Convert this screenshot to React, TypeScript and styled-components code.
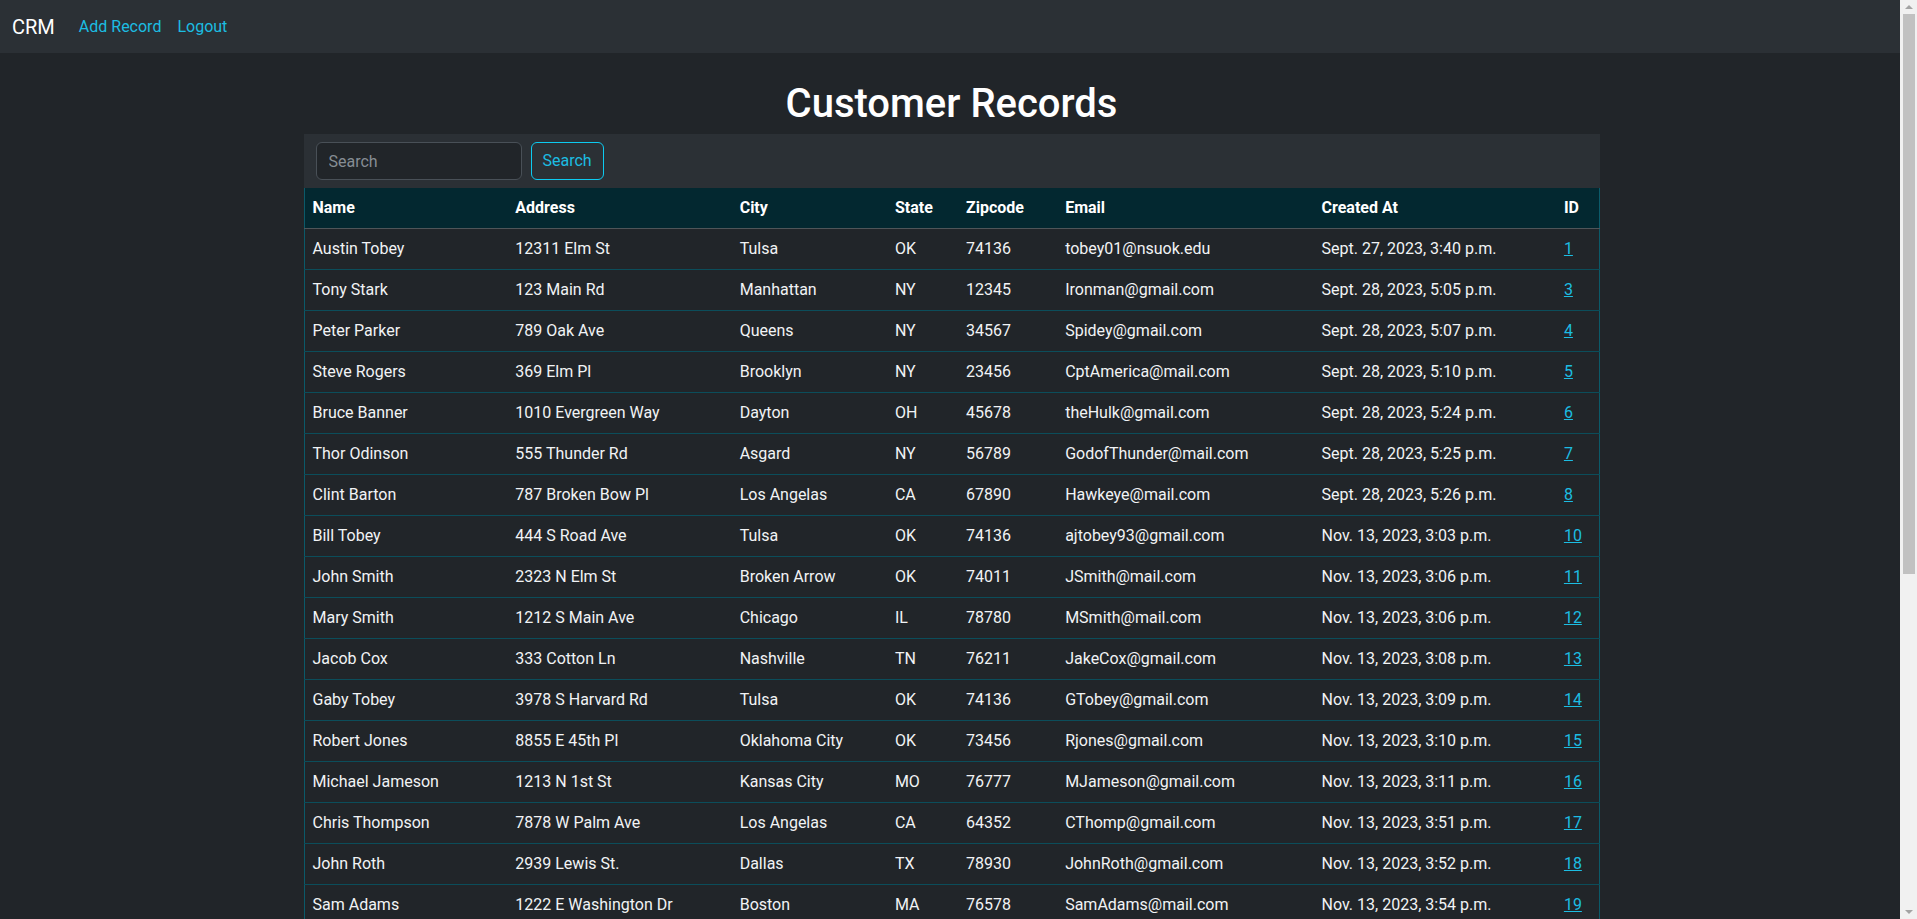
import styled, { createGlobalStyle } from 'styled-components';

const GlobalStyle = createGlobalStyle`
  html, body {
    margin: 0;
    padding: 0;
    background-color: #212529;
    color: #dee2e6;
    font-family: Roboto, "Liberation Sans", sans-serif;
    font-size: 16px;
    line-height: 1.5;
  }
  * { box-sizing: border-box; }
`;

// leaves room for the window scrollbar seen on the right
const Page = styled.div`
  padding-right: 14px;
`;

const ScrollTrack = styled.div`
  position: fixed;
  top: 0;
  right: 0;
  bottom: 0;
  width: 17px;
  display: flex;
  flex-direction: column;
  align-items: center;
  background-color: #f1f1f1;
`;

const ScrollArrow = styled.div<{ $down?: boolean }>`
  height: 14px;
  width: 100%;
  display: flex;
  align-items: center;
  justify-content: center;
  &::before {
    content: '';
    border-left: 4px solid transparent;
    border-right: 4px solid transparent;
    ${(p) => (p.$down ? 'border-top: 4px solid #a3a3a3;' : 'border-bottom: 4px solid #a3a3a3;')}
  }
`;

const ScrollThumb = styled.div`
  width: 12px;
  height: 560px;
  background-color: #c1c1c1;
`;

const ScrollSpacer = styled.div`
  flex: 1;
`;

const Navbar = styled.nav`
  display: flex;
  align-items: center;
  height: 53px;
  padding: 0 12px;
  background-color: #2b3035;
`;

const Brand = styled.a`
  font-size: 20px;
  color: #fff;
  text-decoration: none;
  margin-right: 16px;
  line-height: 30px;
`;

const NavLink = styled.a`
  color: #1cbde2;
  text-decoration: none;
  padding: 8px;
`;

const Main = styled.main`
  max-width: 1320px;
  margin: 0 auto;
  padding: 27px 12px 40px;
`;

const Title = styled.h1`
  margin: 0 0 6px;
  font-size: 40px;
  font-weight: 500;
  line-height: 1.2;
  color: #fff;
  text-align: center;
`;

const SearchBar = styled.form`
  display: flex;
  align-items: center;
  gap: 9px;
  padding: 8px 12px;
  background-color: #2b3035;
`;

const SearchInput = styled.input`
  width: 206px;
  height: 38px;
  padding: 6px 12px;
  font: inherit;
  color: #dee2e6;
  background-color: #212529;
  border: 1px solid #495057;
  border-radius: 6px;
  outline: none;
  &::placeholder { color: #868d94; }
`;

const SearchButton = styled.button`
  height: 38px;
  padding: 6px 11px;
  font: inherit;
  color: #1cbde2;
  background: transparent;
  border: 1px solid #0dcaf0;
  border-radius: 6px;
  cursor: pointer;
`;

const Table = styled.table`
  width: 100%;
  table-layout: fixed;
  border-collapse: collapse;
  border-left: 1px solid #0b5a69;
  border-right: 1px solid #0b5a69;
`;

const HeadRow = styled.tr`
  background-color: #032830;
  border-bottom: 1px solid #4f5559;
`;

const Th = styled.th`
  padding: 8px;
  text-align: left;
  font-weight: 700;
  color: #fff;
  line-height: 24px;
  white-space: nowrap;
`;

const Row = styled.tr`
  border-bottom: 1px solid #0b4d5a;
`;

const Td = styled.td`
  padding: 8px;
  line-height: 24px;
  color: #f1f3f5;
  white-space: nowrap;
  overflow: hidden;
`;

const IdLink = styled.a`
  color: #1cbde2;
  text-decoration: underline;
`;

type Customer = {
  name: string;
  address: string;
  city: string;
  state: string;
  zip: string;
  email: string;
  created: string;
  id: number;
};

const columns: { label: string; width: number }[] = [
  { label: 'Name', width: 203 },
  { label: 'Address', width: 224 },
  { label: 'City', width: 155 },
  { label: 'State', width: 71 },
  { label: 'Zipcode', width: 99 },
  { label: 'Email', width: 256 },
  { label: 'Created At', width: 242 },
  { label: 'ID', width: 43 },
];

const customers: Customer[] = [
  { name: 'Austin Tobey', address: '12311 Elm St', city: 'Tulsa', state: 'OK', zip: '74136', email: 'tobey01@nsuok.edu', created: 'Sept. 27, 2023, 3:40 p.m.', id: 1 },
  { name: 'Tony Stark', address: '123 Main Rd', city: 'Manhattan', state: 'NY', zip: '12345', email: 'Ironman@gmail.com', created: 'Sept. 28, 2023, 5:05 p.m.', id: 3 },
  { name: 'Peter Parker', address: '789 Oak Ave', city: 'Queens', state: 'NY', zip: '34567', email: 'Spidey@gmail.com', created: 'Sept. 28, 2023, 5:07 p.m.', id: 4 },
  { name: 'Steve Rogers', address: '369 Elm Pl', city: 'Brooklyn', state: 'NY', zip: '23456', email: 'CptAmerica@mail.com', created: 'Sept. 28, 2023, 5:10 p.m.', id: 5 },
  { name: 'Bruce Banner', address: '1010 Evergreen Way', city: 'Dayton', state: 'OH', zip: '45678', email: 'theHulk@gmail.com', created: 'Sept. 28, 2023, 5:24 p.m.', id: 6 },
  { name: 'Thor Odinson', address: '555 Thunder Rd', city: 'Asgard', state: 'NY', zip: '56789', email: 'GodofThunder@mail.com', created: 'Sept. 28, 2023, 5:25 p.m.', id: 7 },
  { name: 'Clint Barton', address: '787 Broken Bow Pl', city: 'Los Angelas', state: 'CA', zip: '67890', email: 'Hawkeye@mail.com', created: 'Sept. 28, 2023, 5:26 p.m.', id: 8 },
  { name: 'Bill Tobey', address: '444 S Road Ave', city: 'Tulsa', state: 'OK', zip: '74136', email: 'ajtobey93@gmail.com', created: 'Nov. 13, 2023, 3:03 p.m.', id: 10 },
  { name: 'John Smith', address: '2323 N Elm St', city: 'Broken Arrow', state: 'OK', zip: '74011', email: 'JSmith@mail.com', created: 'Nov. 13, 2023, 3:06 p.m.', id: 11 },
  { name: 'Mary Smith', address: '1212 S Main Ave', city: 'Chicago', state: 'IL', zip: '78780', email: 'MSmith@mail.com', created: 'Nov. 13, 2023, 3:06 p.m.', id: 12 },
  { name: 'Jacob Cox', address: '333 Cotton Ln', city: 'Nashville', state: 'TN', zip: '76211', email: 'JakeCox@gmail.com', created: 'Nov. 13, 2023, 3:08 p.m.', id: 13 },
  { name: 'Gaby Tobey', address: '3978 S Harvard Rd', city: 'Tulsa', state: 'OK', zip: '74136', email: 'GTobey@gmail.com', created: 'Nov. 13, 2023, 3:09 p.m.', id: 14 },
  { name: 'Robert Jones', address: '8855 E 45th Pl', city: 'Oklahoma City', state: 'OK', zip: '73456', email: 'Rjones@gmail.com', created: 'Nov. 13, 2023, 3:10 p.m.', id: 15 },
  { name: 'Michael Jameson', address: '1213 N 1st St', city: 'Kansas City', state: 'MO', zip: '76777', email: 'MJameson@gmail.com', created: 'Nov. 13, 2023, 3:11 p.m.', id: 16 },
  { name: 'Chris Thompson', address: '7878 W Palm Ave', city: 'Los Angelas', state: 'CA', zip: '64352', email: 'CThomp@gmail.com', created: 'Nov. 13, 2023, 3:51 p.m.', id: 17 },
  { name: 'John Roth', address: '2939 Lewis St.', city: 'Dallas', state: 'TX', zip: '78930', email: 'JohnRoth@gmail.com', created: 'Nov. 13, 2023, 3:52 p.m.', id: 18 },
  { name: 'Sam Adams', address: '1222 E Washington Dr', city: 'Boston', state: 'MA', zip: '76578', email: 'SamAdams@mail.com', created: 'Nov. 13, 2023, 3:54 p.m.', id: 19 },
];

const App = () => {
  return (
    <Page>
      <GlobalStyle />
      <Navbar>
        <Brand href="#">CRM</Brand>
        <NavLink href="#">Add Record</NavLink>
        <NavLink href="#">Logout</NavLink>
      </Navbar>
      <Main>
        <Title>Customer Records</Title>
        <SearchBar onSubmit={(e) => e.preventDefault()}>
          <SearchInput type="search" placeholder="Search" />
          <SearchButton type="submit">Search</SearchButton>
        </SearchBar>
        <Table>
          <colgroup>
            {columns.map((c) => (
              <col key={c.label} style={{ width: c.width }} />
            ))}
          </colgroup>
          <thead>
            <HeadRow>
              {columns.map((c) => (
                <Th key={c.label}>{c.label}</Th>
              ))}
            </HeadRow>
          </thead>
          <tbody>
            {customers.map((c) => (
              <Row key={c.id}>
                <Td>{c.name}</Td>
                <Td>{c.address}</Td>
                <Td>{c.city}</Td>
                <Td>{c.state}</Td>
                <Td>{c.zip}</Td>
                <Td>{c.email}</Td>
                <Td>{c.created}</Td>
                <Td>
                  <IdLink href="#">{c.id}</IdLink>
                </Td>
              </Row>
            ))}
          </tbody>
        </Table>
      </Main>
      <ScrollTrack aria-hidden>
        <ScrollArrow />
        <ScrollThumb />
        <ScrollSpacer />
        <ScrollArrow $down />
      </ScrollTrack>
    </Page>
  );
};

export default App;
